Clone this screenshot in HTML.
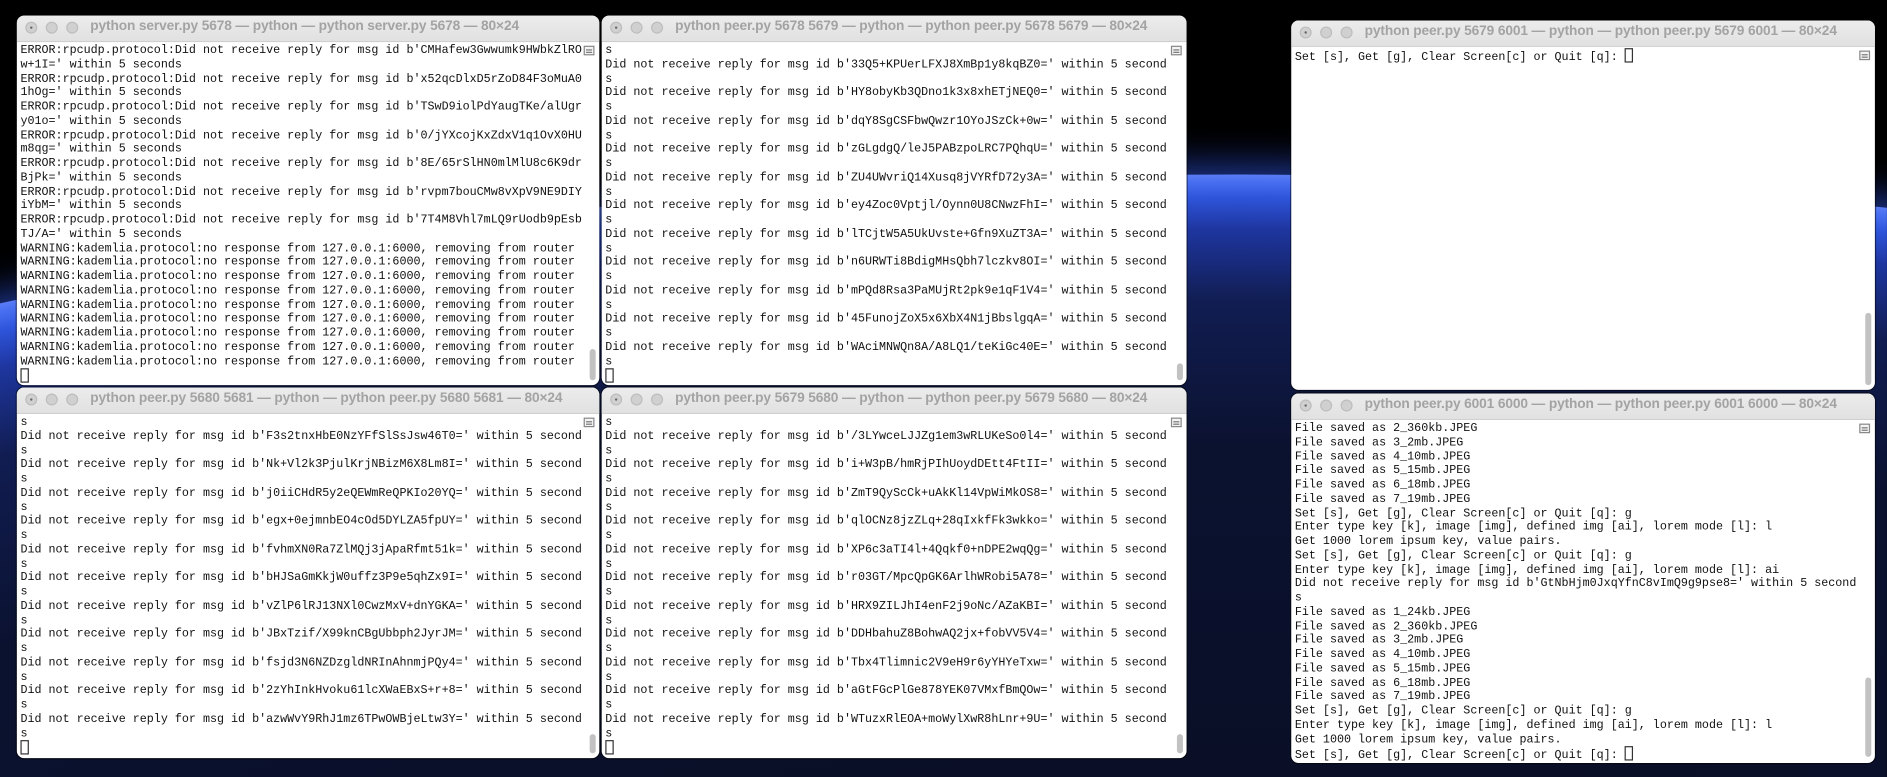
<!DOCTYPE html>
<html><head><meta charset="utf-8">
<style>
html,body{margin:0;padding:0;background:#000;width:1887px;height:777px;overflow:hidden}
#s{position:absolute;left:0;top:0;width:1568px;height:646px;transform:scale(1.2034);transform-origin:0 0;overflow:hidden;background:#000}
.earth{position:absolute;left:-970px;top:145px;width:4000px;height:1500px;border-radius:50%;
background:radial-gradient(ellipse closest-side at 50% 50%,#080c1e 0%,#0b1230 70%,#111d52 86%,#1e36a0 94%,#2f55dc 97.5%,#4a70f2 99.3%,#5a7cf5 100%);
box-shadow:0 0 30px 8px rgba(50,90,240,.6)}
.w{position:absolute;background:#fff;border-radius:6px;overflow:hidden;box-shadow:0 0 0 1px rgba(0,0,0,.5)}
.tb{position:absolute;left:0;top:0;right:0;height:21px;background:linear-gradient(#ececec,#e1e1e1);border-bottom:1px solid #cfcfcf}
.tl{position:absolute;top:5px;width:10px;height:10px;border-radius:50%;background:#d0d0d0;border:1px solid #bdbdbd;box-sizing:border-box}
.tl.a::after{content:"";position:absolute;left:3px;top:3px;width:2px;height:2px;border-radius:50%;background:#666}
.tt{position:absolute;left:61px;top:3px;font:bold 11.4px "Liberation Sans",sans-serif;color:#a3a3a3;white-space:nowrap;letter-spacing:-.1px}
.c{position:absolute;left:3px;top:23px;font:9.73px/11.75px "Liberation Mono",monospace;color:#111;white-space:pre;margin:0}
.ic{position:absolute;right:4px;top:25px;width:9px;height:8px;border:1px solid #888;box-sizing:border-box;background:#f4f4f4}
.ic::after{content:"";position:absolute;left:1px;right:1px;top:2px;height:1px;background:#777;box-shadow:0 2px 0 #777}
.th{position:absolute;right:3px;width:5px;border-radius:3px;background:#c2c2c2}
.cur{display:inline-block;width:5px;height:10px;border:1px solid #333;vertical-align:-2px}
</style></head><body><div id="s">
<div class="earth"></div>

<div class="w" style="left:14px;top:13px;width:484px;height:307px">
<div class="tb"><div class="tl a" style="left:7px"></div><div class="tl" style="left:24px"></div><div class="tl" style="left:41px"></div><div class="tt">python server.py 5678 — python — python server.py 5678 — 80×24</div></div>
<div class="ic"></div><div class="th" style="top:277px;height:26px"></div>
<pre class="c">ERROR:rpcudp.protocol:Did not receive reply for msg id b'CMHafew3Gwwumk9HWbkZlRO
w+1I=' within 5 seconds
ERROR:rpcudp.protocol:Did not receive reply for msg id b'x52qcDlxD5rZoD84F3oMuA0
1hOg=' within 5 seconds
ERROR:rpcudp.protocol:Did not receive reply for msg id b'TSwD9iolPdYaugTKe/alUgr
y01o=' within 5 seconds
ERROR:rpcudp.protocol:Did not receive reply for msg id b'0/jYXcojKxZdxV1q1OvX0HU
m8qg=' within 5 seconds
ERROR:rpcudp.protocol:Did not receive reply for msg id b'8E/65rSlHN0mlMlU8c6K9dr
BjPk=' within 5 seconds
ERROR:rpcudp.protocol:Did not receive reply for msg id b'rvpm7bouCMw8vXpV9NE9DIY
iYbM=' within 5 seconds
ERROR:rpcudp.protocol:Did not receive reply for msg id b'7T4M8Vhl7mLQ9rUodb9pEsb
TJ/A=' within 5 seconds
WARNING:kademlia.protocol:no response from 127.0.0.1:6000, removing from router
WARNING:kademlia.protocol:no response from 127.0.0.1:6000, removing from router
WARNING:kademlia.protocol:no response from 127.0.0.1:6000, removing from router
WARNING:kademlia.protocol:no response from 127.0.0.1:6000, removing from router
WARNING:kademlia.protocol:no response from 127.0.0.1:6000, removing from router
WARNING:kademlia.protocol:no response from 127.0.0.1:6000, removing from router
WARNING:kademlia.protocol:no response from 127.0.0.1:6000, removing from router
WARNING:kademlia.protocol:no response from 127.0.0.1:6000, removing from router
WARNING:kademlia.protocol:no response from 127.0.0.1:6000, removing from router
<span class="cur"></span></pre></div>

<div class="w" style="left:500px;top:13px;width:486px;height:307px">
<div class="tb"><div class="tl a" style="left:7px"></div><div class="tl" style="left:24px"></div><div class="tl" style="left:41px"></div><div class="tt">python peer.py 5678 5679 — python — python peer.py 5678 5679 — 80×24</div></div>
<div class="ic"></div><div class="th" style="top:289px;height:14px"></div>
<pre class="c">s
Did not receive reply for msg id b'33Q5+KPUerLFXJ8XmBp1y8kqBZ0=' within 5 second
s
Did not receive reply for msg id b'HY8obyKb3QDno1k3x8xhETjNEQ0=' within 5 second
s
Did not receive reply for msg id b'dqY8SgCSFbwQwzr1OYoJSzCk+0w=' within 5 second
s
Did not receive reply for msg id b'zGLgdgQ/leJ5PABzpoLRC7PQhqU=' within 5 second
s
Did not receive reply for msg id b'ZU4UWvriQ14Xusq8jVYRfD72y3A=' within 5 second
s
Did not receive reply for msg id b'ey4Zoc0Vptjl/Oynn0U8CNwzFhI=' within 5 second
s
Did not receive reply for msg id b'lTCjtW5A5UkUvste+Gfn9XuZT3A=' within 5 second
s
Did not receive reply for msg id b'n6URWTi8BdigMHsQbh7lczkv8OI=' within 5 second
s
Did not receive reply for msg id b'mPQd8Rsa3PaMUjRt2pk9e1qF1V4=' within 5 second
s
Did not receive reply for msg id b'45FunojZoX5x6XbX4N1jBbslgqA=' within 5 second
s
Did not receive reply for msg id b'WAciMNWQn8A/A8LQ1/teKiGc40E=' within 5 second
s
<span class="cur"></span></pre></div>

<div class="w" style="left:14px;top:322px;width:484px;height:308px">
<div class="tb"><div class="tl a" style="left:7px"></div><div class="tl" style="left:24px"></div><div class="tl" style="left:41px"></div><div class="tt">python peer.py 5680 5681 — python — python peer.py 5680 5681 — 80×24</div></div>
<div class="ic"></div><div class="th" style="top:288px;height:16px"></div>
<pre class="c">s
Did not receive reply for msg id b'F3s2tnxHbE0NzYFfSlSsJsw46T0=' within 5 second
s
Did not receive reply for msg id b'Nk+Vl2k3PjulKrjNBizM6X8Lm8I=' within 5 second
s
Did not receive reply for msg id b'j0iiCHdR5y2eQEWmReQPKIo20YQ=' within 5 second
s
Did not receive reply for msg id b'egx+0ejmnbEO4cOd5DYLZA5fpUY=' within 5 second
s
Did not receive reply for msg id b'fvhmXN0Ra7ZlMQj3jApaRfmt51k=' within 5 second
s
Did not receive reply for msg id b'bHJSaGmKkjW0uffz3P9e5qhZx9I=' within 5 second
s
Did not receive reply for msg id b'vZlP6lRJ13NXl0CwzMxV+dnYGKA=' within 5 second
s
Did not receive reply for msg id b'JBxTzif/X99knCBgUbbph2JyrJM=' within 5 second
s
Did not receive reply for msg id b'fsjd3N6NZDzgldNRInAhnmjPQy4=' within 5 second
s
Did not receive reply for msg id b'2zYhInkHvoku61lcXWaEBxS+r+8=' within 5 second
s
Did not receive reply for msg id b'azwWvY9RhJ1mz6TPwOWBjeLtw3Y=' within 5 second
s
<span class="cur"></span></pre></div>

<div class="w" style="left:500px;top:322px;width:486px;height:308px">
<div class="tb"><div class="tl a" style="left:7px"></div><div class="tl" style="left:24px"></div><div class="tl" style="left:41px"></div><div class="tt">python peer.py 5679 5680 — python — python peer.py 5679 5680 — 80×24</div></div>
<div class="ic"></div><div class="th" style="top:288px;height:16px"></div>
<pre class="c">s
Did not receive reply for msg id b'/3LYwceLJJZg1em3wRLUKeSo0l4=' within 5 second
s
Did not receive reply for msg id b'i+W3pB/hmRjPIhUoydDEtt4FtII=' within 5 second
s
Did not receive reply for msg id b'ZmT9QyScCk+uAkKl14VpWiMkOS8=' within 5 second
s
Did not receive reply for msg id b'qlOCNz8jzZLq+28qIxkfFk3wkko=' within 5 second
s
Did not receive reply for msg id b'XP6c3aTI4l+4Qqkf0+nDPE2wqQg=' within 5 second
s
Did not receive reply for msg id b'r03GT/MpcQpGK6ArlhWRobi5A78=' within 5 second
s
Did not receive reply for msg id b'HRX9ZILJhI4enF2j9oNc/AZaKBI=' within 5 second
s
Did not receive reply for msg id b'DDHbahuZ8BohwAQ2jx+fobVV5V4=' within 5 second
s
Did not receive reply for msg id b'Tbx4Tlimnic2V9eH9r6yYHYeTxw=' within 5 second
s
Did not receive reply for msg id b'aGtFGcPlGe878YEK07VMxfBmQOw=' within 5 second
s
Did not receive reply for msg id b'WTuzxRlEOA+moWylXwR8hLnr+9U=' within 5 second
s
<span class="cur"></span></pre></div>

<div class="w" style="left:1073px;top:17px;width:485px;height:307px">
<div class="tb"><div class="tl a" style="left:7px"></div><div class="tl" style="left:24px"></div><div class="tl" style="left:41px"></div><div class="tt">python peer.py 5679 6001 — python — python peer.py 5679 6001 — 80×24</div></div>
<div class="ic"></div><div class="th" style="top:243px;height:60px"></div>
<pre class="c">Set [s], Get [g], Clear Screen[c] or Quit [q]: <span class="cur"></span></pre></div>

<div class="w" style="left:1073px;top:327px;width:485px;height:307px">
<div class="tb"><div class="tl a" style="left:7px"></div><div class="tl" style="left:24px"></div><div class="tl" style="left:41px"></div><div class="tt">python peer.py 6001 6000 — python — python peer.py 6001 6000 — 80×24</div></div>
<div class="ic"></div><div class="th" style="top:236px;height:66px"></div>
<pre class="c">File saved as 2_360kb.JPEG
File saved as 3_2mb.JPEG
File saved as 4_10mb.JPEG
File saved as 5_15mb.JPEG
File saved as 6_18mb.JPEG
File saved as 7_19mb.JPEG
Set [s], Get [g], Clear Screen[c] or Quit [q]: g
Enter type key [k], image [img], defined img [ai], lorem mode [l]: l
Get 1000 lorem ipsum key, value pairs.
Set [s], Get [g], Clear Screen[c] or Quit [q]: g
Enter type key [k], image [img], defined img [ai], lorem mode [l]: ai
Did not receive reply for msg id b'GtNbHjm0JxqYfnC8vImQ9g9pse8=' within 5 second
s
File saved as 1_24kb.JPEG
File saved as 2_360kb.JPEG
File saved as 3_2mb.JPEG
File saved as 4_10mb.JPEG
File saved as 5_15mb.JPEG
File saved as 6_18mb.JPEG
File saved as 7_19mb.JPEG
Set [s], Get [g], Clear Screen[c] or Quit [q]: g
Enter type key [k], image [img], defined img [ai], lorem mode [l]: l
Get 1000 lorem ipsum key, value pairs.
Set [s], Get [g], Clear Screen[c] or Quit [q]: <span class="cur"></span></pre></div>

</div></body></html>
